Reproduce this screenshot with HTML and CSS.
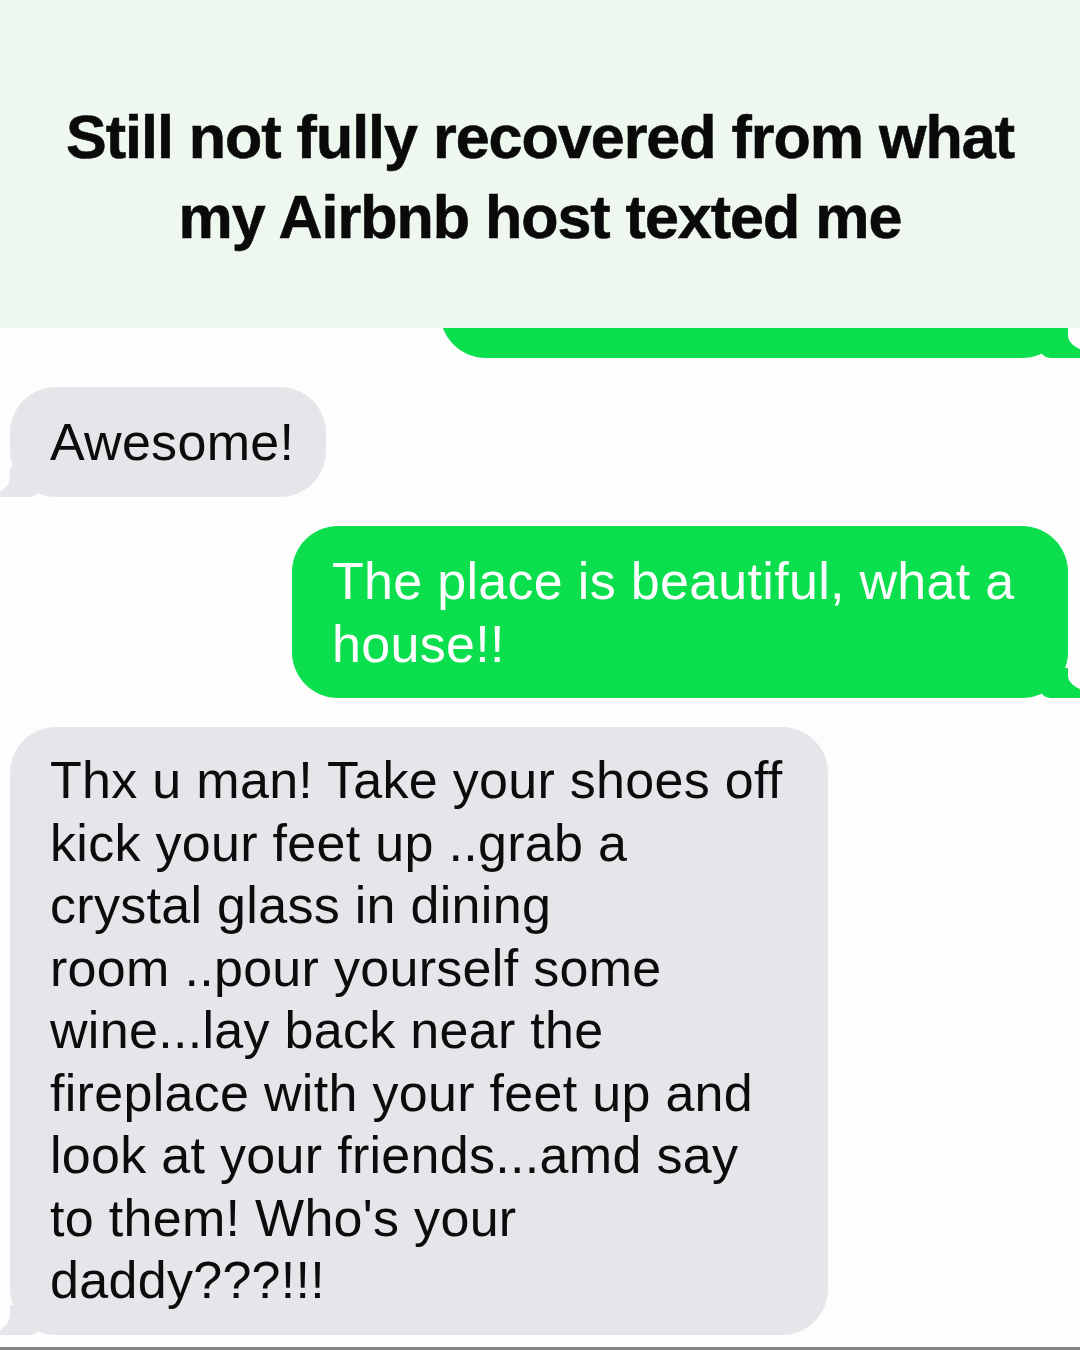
FILE: index.html
```html
<!DOCTYPE html>
<html lang="en">
<head>
<meta charset="utf-8">
<title>Airbnb host text</title>
<link rel="stylesheet" href="styles.css">
</head>
<body>
<div class="page">
  <header class="header">
    <h1 class="title">Still not fully recovered from what<br>my Airbnb host texted me</h1>
  </header>
  <main class="chat">
    <div class="row row-sent">
      <div class="bubble sent partial">Just got in, thank you!<br>So happy, enjoying it</div>
    </div>
    <div class="row row-recv">
      <div class="bubble recv small">Awesome!</div>
    </div>
    <div class="row row-sent">
      <div class="bubble sent wide">The place is beautiful, what a<br>house!!</div>
    </div>
    <div class="row row-recv">
      <div class="bubble recv big">Thx u man! Take your shoes off<br>kick your feet up ..grab a<br>crystal glass in dining<br>room ..pour yourself some<br>wine...lay back near the<br>fireplace with your feet up and<br>look at your friends...amd say<br>to them! Who's your<br>daddy???!!!</div>
    </div>
  </main>
  <div class="bottom-line"></div>
</div>
</body>
</html>
```

FILE: styles.css
```css
* { box-sizing: border-box; }
html, body { margin: 0; padding: 0; }
body {
  width: 1080px;
  height: 1350px;
  overflow: hidden;
  background: #fdfdfd;
  font-family: "Liberation Sans", Arial, sans-serif;
}
.page {
  width: 1080px;
  height: 1350px;
  display: flex;
  flex-direction: column;
  overflow: hidden;
}
.header {
  height: 328px;
  flex: 0 0 328px;
  background: #eef8ef;
  padding-top: 97px;
  position: relative;
  z-index: 2;
}
.title {
  margin: 0;
  text-align: center;
  font-family: "Liberation Sans", Arial, sans-serif;
  font-weight: 700;
  font-size: 61px;
  line-height: 80px;
  letter-spacing: -1px;
  color: #0a0a0a;
  -webkit-text-stroke: 0.6px #0a0a0a;
}
.chat {
  flex: 1;
  background: #fdfdfd;
  overflow: hidden;
  padding: 0 12px 0 10px;
  display: flex;
  flex-direction: column;
  position: relative;
}
.row { display: flex; }
.row-sent { justify-content: flex-end; }
.row-recv { justify-content: flex-start; }
.row + .row { margin-top: 29px; }

.bubble {
  position: relative;
  isolation: isolate;
  font-size: 52px;
  line-height: 62.5px;
  border-radius: 46px;
  padding: 24px 30px 24px 40px;
  letter-spacing: 0.3px;
  white-space: nowrap;
}
.sent {
  background: #0bdf4d;
  color: #ffffff;
}
.recv {
  background: #e5e5ea;
  color: #0c0c0c;
}
.partial {
  width: 628px;
  height: 160px;
  margin-top: -130px;
  padding-top: 2px;
}
.small { width: 316px; height: 110px; }
.wide { width: 776px; height: 172px; }
.big { width: 818px; height: 608px; padding-top: 22px; }

/* tails */
.sent::before,
.sent::after,
.recv::before,
.recv::after {
  content: "";
  position: absolute;
  bottom: 0;
}
.sent::before {
  right: -40px;
  width: 68px;
  height: 30px;
  background: #0bdf4d;
  border-bottom-left-radius: 10px;
  z-index: -1;
}
.sent::after {
  right: -60px;
  width: 60px;
  height: 32px;
  background: #fdfdfd;
  border-bottom-left-radius: 60px 22px;
}
.recv::before {
  left: -40px;
  width: 70px;
  height: 30px;
  background: #e5e5ea;
  border-bottom-right-radius: 10px;
  z-index: -1;
}
.recv::after {
  left: -30px;
  width: 30px;
  height: 32px;
  background: #fdfdfd;
  border-bottom-right-radius: 30px 20px;
}
.bottom-line {
  flex: 0 0 3px;
  height: 3px;
  background: #858585;
}
```
